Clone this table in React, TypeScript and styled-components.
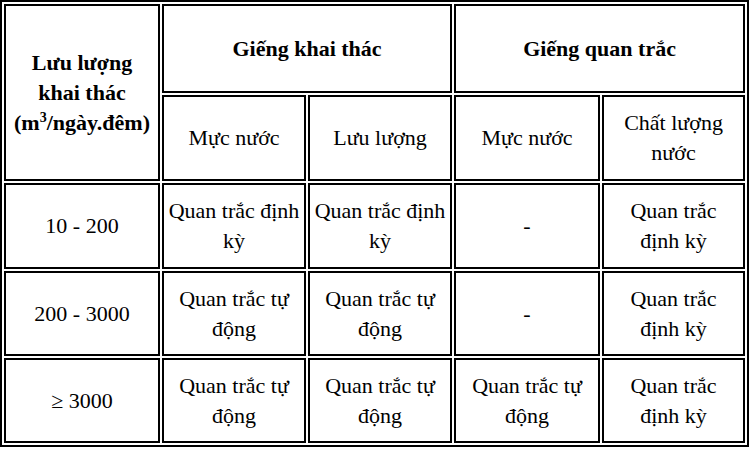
import React from "react";
import styled, { createGlobalStyle } from "styled-components";

const Global = createGlobalStyle`
  *, *::before, *::after { box-sizing: border-box; }
  html, body {
    margin: 0;
    padding: 0;
    background: #ffffff;
    font-family: "Liberation Serif", "DejaVu Serif", serif;
  }
`;

const serif = `"Liberation Serif", "DejaVu Serif", serif`;

const Table = styled.table`
  width: 749px;
  table-layout: fixed;
  border-collapse: separate;
  border-spacing: 2px;
  border: 2px solid #000000;
  font-family: ${serif};
  font-size: 22px;
  line-height: 30px;
  color: #000000;
  background: #ffffff;
`;

const Row = styled.tr<{ $h: number }>`
  height: ${(p) => p.$h}px;
`;

const HeadCell = styled.th<{ $h?: number }>`
  border: 2px solid #000000;
  padding: 0 4px;
  text-align: center;
  vertical-align: middle;
  font-family: ${serif};
  font-size: 22px;
  font-weight: 700;
  white-space: pre-line;
  ${(p) => (p.$h ? `height: ${p.$h}px;` : "")}
`;

const SubHeadCell = styled.th<{ $h?: number }>`
  border: 2px solid #000000;
  padding: 0 4px;
  text-align: center;
  vertical-align: middle;
  font-family: ${serif};
  font-size: 22px;
  font-weight: 400;
  white-space: pre-line;
  ${(p) => (p.$h ? `height: ${p.$h}px;` : "")}
`;

const Cell = styled.td<{ $h?: number }>`
  border: 2px solid #000000;
  padding: 0 4px;
  text-align: center;
  vertical-align: middle;
  font-family: ${serif};
  font-size: 22px;
  white-space: pre-line;
  ${(p) => (p.$h ? `height: ${p.$h}px;` : "")}
`;

const Sup = styled.sup`
  font-size: 14px;
  line-height: 0;
  vertical-align: 8px;
`;

const widths = [156, 144, 144, 146, 143];

const rows: { h: number; cells: string[] }[] = [
  {
    h: 86,
    cells: ["10 - 200", "Quan trắc định\nkỳ", "Quan trắc định\nkỳ", "-", "Quan trắc\nđịnh kỳ"],
  },
  {
    h: 85,
    cells: ["200 - 3000", "Quan trắc tự\nđộng", "Quan trắc tự\nđộng", "-", "Quan trắc\nđịnh kỳ"],
  },
  {
    h: 85,
    cells: ["≥ 3000", "Quan trắc tự\nđộng", "Quan trắc tự\nđộng", "Quan trắc tự\nđộng", "Quan trắc\nđịnh kỳ"],
  },
];

export default function App() {
  return (
    <>
      <Global />
      <Table>
        <colgroup>
          {widths.map((w, i) => (
            <col key={i} style={{ width: w }} />
          ))}
        </colgroup>
        <thead>
          <Row $h={89}>
            <HeadCell rowSpan={2}>
              {"Lưu lượng\nkhai thác\n(m"}
              <Sup>3</Sup>
              {"/ngày.đêm)"}
            </HeadCell>
            <HeadCell colSpan={2} $h={89}>Giếng khai thác</HeadCell>
            <HeadCell colSpan={2} $h={89}>Giếng quan trắc</HeadCell>
          </Row>
          <Row $h={86}>
            <SubHeadCell $h={86}>Mực nước</SubHeadCell>
            <SubHeadCell $h={86}>Lưu lượng</SubHeadCell>
            <SubHeadCell $h={86}>Mực nước</SubHeadCell>
            <SubHeadCell $h={86}>{"Chất lượng\nnước"}</SubHeadCell>
          </Row>
        </thead>
        <tbody>
          {rows.map((r, i) => (
            <Row key={i} $h={r.h}>
              {r.cells.map((c, j) => (
                <Cell key={j} $h={r.h}>
                  {c}
                </Cell>
              ))}
            </Row>
          ))}
        </tbody>
      </Table>
    </>
  );
}
